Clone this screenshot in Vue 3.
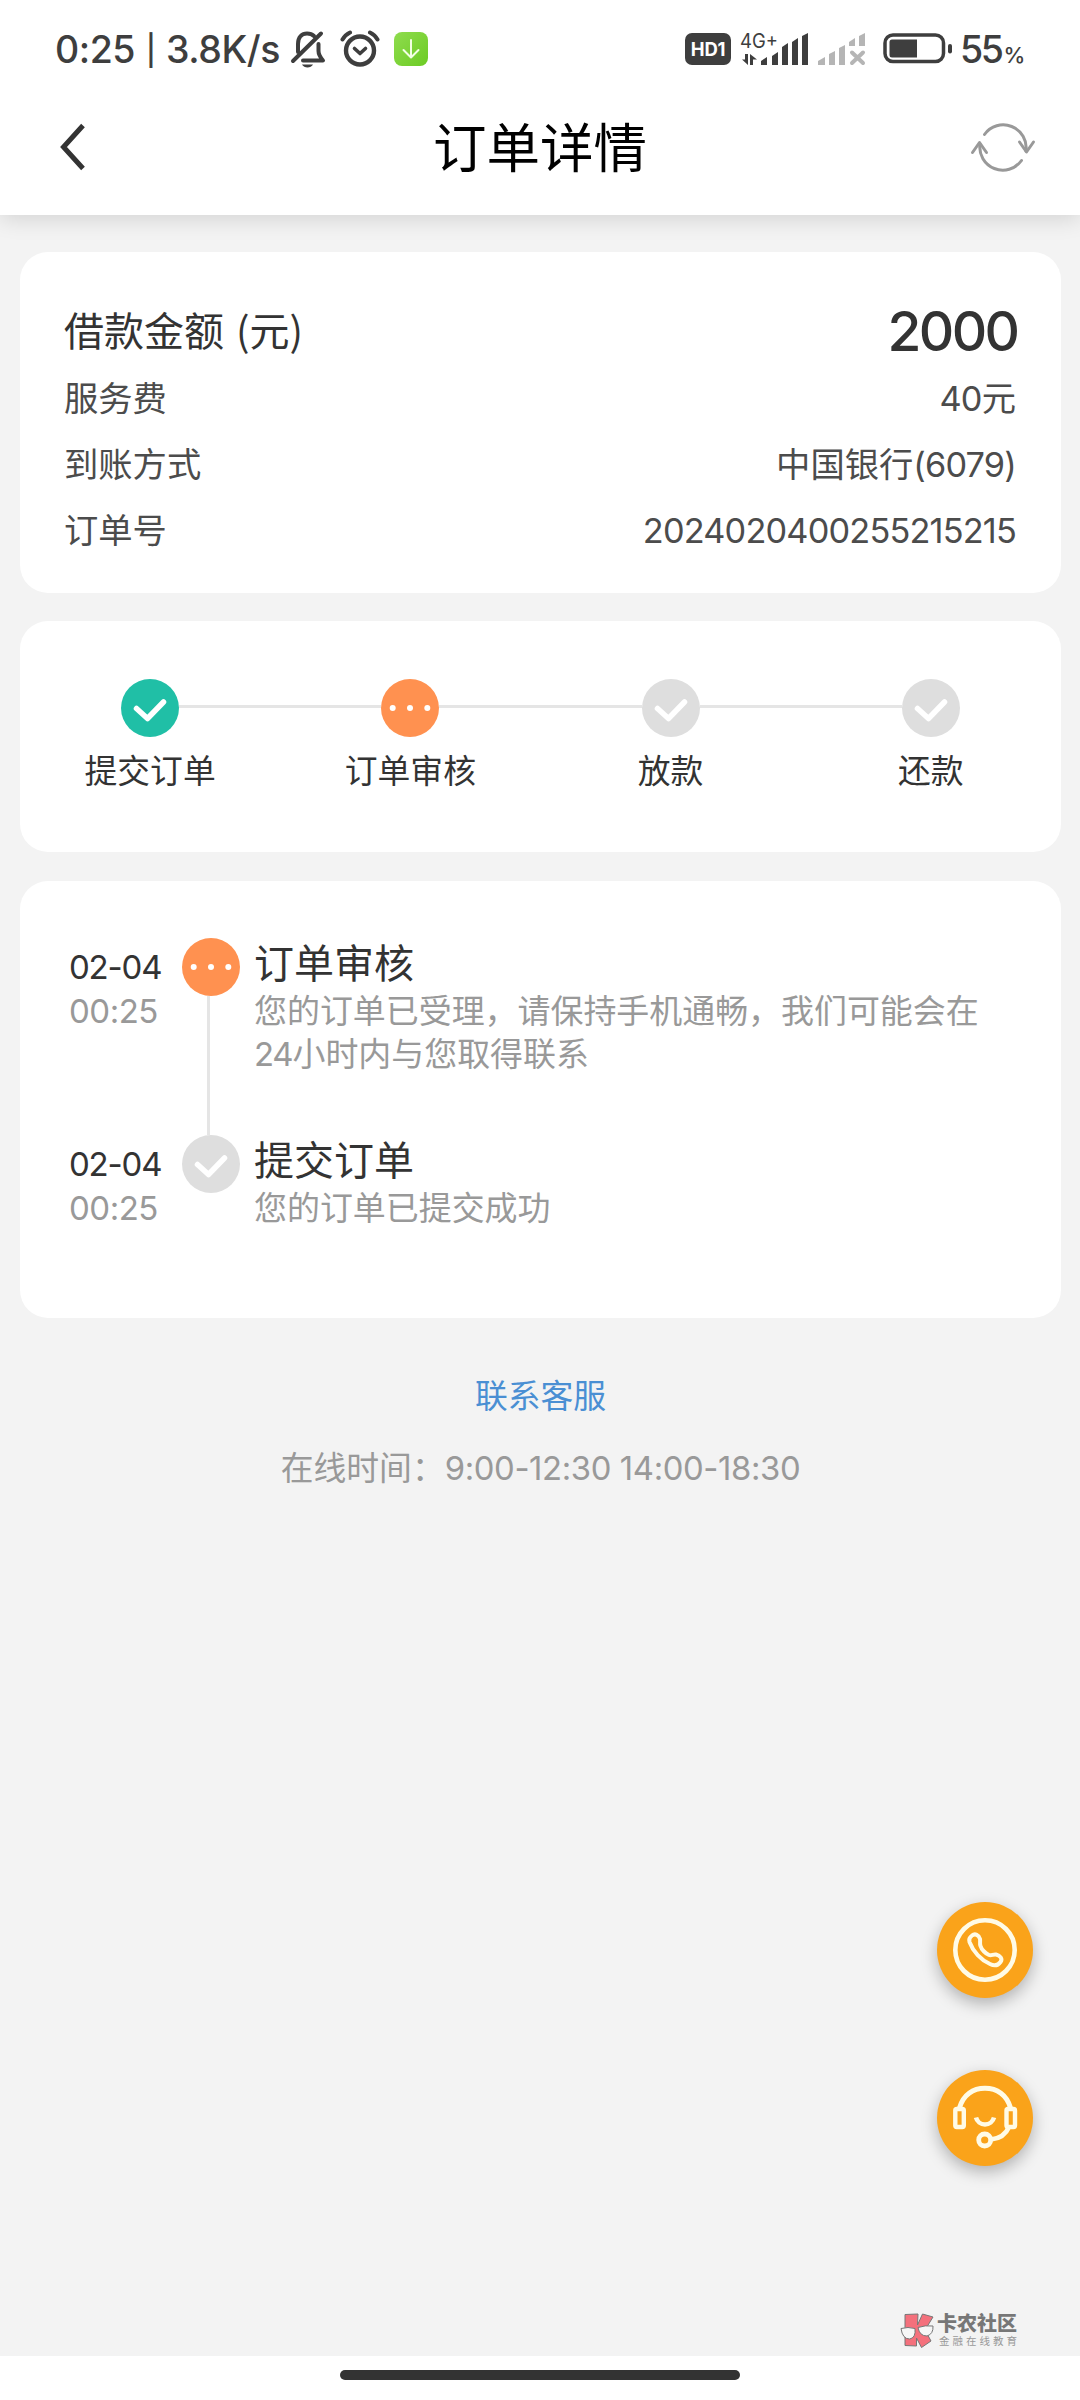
<script setup>
const rows = [
  { label: '服务费', parts: [{ n: '40' }, { t: '元' }] },
  { label: '到账方式', parts: [{ t: '中国银行' }, { n: '(6079)' }] },
  { label: '订单号', parts: [{ n: '2024020400255215215' }] },
]

const steps = [
  { label: '提交订单', state: 'done' },
  { label: '订单审核', state: 'doing' },
  { label: '放款', state: 'todo' },
  { label: '还款', state: 'todo' },
]

const logs = [
  { date: '02-04', time: '00:25', state: 'doing', title: '订单审核', lead: '您的订单已受理，请保持手机通畅，我们可能会在', num: '24', rest: '小时内与您取得联系' },
  { date: '02-04', time: '00:25', state: 'todo', title: '提交订单', lead: '您的订单已提交成功', num: '', rest: '' },
]
</script>

<template>
  <div class="screen">
    <header class="top">
      <div class="status">
        <div class="status-left">
          <span class="clock">0:25 <span class="bar">|</span> 3.8K/s</span>
          <svg class="bell" width="36" height="38" viewBox="0 0 36 38" fill="none" stroke="#3e3e3e" stroke-width="4" stroke-linecap="round">
            <path d="M8 22V14C8 7 12 3.500 17 3.500C20 3.500 22 4 24 6" />
            <path d="M28.500 14V21C28.500 25 30 27 33 30.500H13" stroke-linejoin="round" />
            <path d="M31 3.500L3 31" />
            <path d="M12 34.500h11c-2 4-9 4-11 0z" fill="#3e3e3e" stroke="none" />
          </svg>
          <svg class="alarm" width="40" height="38" viewBox="0 0 40 38" fill="none" stroke="#3e3e3e" stroke-linecap="round">
            <circle cx="20" cy="20.500" r="14" stroke-width="4.400" />
            <path d="M14.500 18.500L20 23.500L25.500 18.500" stroke-width="3.600" stroke-linejoin="round" />
            <path d="M2.500 9.500Q5 5 10 2.500M37.500 9.500Q35 5 30 2.500" stroke-width="4" />
          </svg>
          <svg class="down" width="34" height="34" viewBox="0 0 34 34" fill="none">
            <defs>
              <linearGradient id="dl" x1="0" y1="0" x2="1" y2="1">
                <stop offset="0" stop-color="#8fdc4e" />
                <stop offset="1" stop-color="#6ccb24" />
              </linearGradient>
            </defs>
            <rect width="34" height="34" rx="8" fill="url(#dl)" />
            <path d="M17 8V25M9.500 18L17 25.500L24.500 18" stroke="#f2ffe4" stroke-width="2" stroke-linecap="round" stroke-linejoin="round" />
          </svg>
        </div>
        <div class="status-right">
          <span class="hd">HD1</span>
          <svg class="signal" width="68" height="46" viewBox="0 -10 68 46" fill="#3e3e3e">
            <text x="0" y="15.500" font-family="Inter, sans-serif" font-size="19.500" textLength="38" lengthAdjust="spacingAndGlyphs">4G+</text>
            <path d="M5 22h3v11L2 27.500h3zM10 33V22l7 5.500h-4V33z" />
            <path d="M21 33v-4l6-4v8zM32 33v-9l6-4v13zM42 33V15l6-4v22zM52 33V10l6-4v27zM62 33V4l6-3v32z" />
          </svg>
          <svg class="signal-off" width="48" height="36" viewBox="0 0 48 36" fill="#b5b5b5">
            <path d="M0 33v-4l7-4v8zM11 33V22l6-3v14zM21 33V16l6-3v20zM31 14V10l6-4v8zM41 14V4l6-3v13z" />
            <path d="M34 20.500L45 31M45 20.500L34 31" stroke="#b5b5b5" stroke-width="4" stroke-linecap="round" />
          </svg>
          <svg class="battery" width="70" height="32" viewBox="0 0 70 32">
            <rect x="2" y="2" width="58.500" height="26.500" rx="8" fill="none" stroke="#3e3e3e" stroke-width="3.500" />
            <path d="M9 6.500h25v18H9q-2.500 0-2.500-2.500V9q0-2.500 2.500-2.500z" fill="#3e3e3e" />
            <rect x="65" y="11" width="4" height="9.500" rx="2" fill="#3e3e3e" />
          </svg>
          <span class="pct">55<small>%</small></span>
        </div>
      </div>
      <nav class="nav">
        <svg width="70" height="60" viewBox="0 0 70 60" fill="none" stroke="#333" stroke-width="5">
          <path d="M41 8.500L21.500 30L41 51.500" />
        </svg>
        <h1>订单详情</h1>
        <svg width="70" height="60" viewBox="0 0 70 60" fill="none" stroke="#999" stroke-width="3" stroke-linecap="round" stroke-linejoin="round">
          <path d="M16.500 17.500A23 23 0 0 1 58 34" />
          <path d="M51.500 25L58.500 35L65.500 25" />
          <path d="M53.500 43.500A23 23 0 0 1 12 27" />
          <path d="M4.500 35.500L11.500 25.500L18.500 35.500" />
        </svg>
      </nav>
    </header>

    <main class="body">
      <section class="card summary">
        <div class="row amount">
          <span>借款金额 (元)</span>
          <strong>2000</strong>
        </div>
        <div v-for="r in rows" :key="r.label" class="row">
          <span>{{ r.label }}</span>
          <span class="val"><template v-for="(p, i) in r.parts" :key="i"><span v-if="p.n" class="num">{{ p.n }}</span><template v-else>{{ p.t }}</template></template></span>
        </div>
      </section>

      <section class="card steps">
        <div v-for="s in steps" :key="s.label" class="step">
          <div class="rail">
            <svg class="dot" :class="s.state" width="58" height="58" viewBox="0 0 58 58">
              <circle cx="29" cy="29" r="29" />
              <g v-if="s.state === 'doing'" class="pips">
                <circle cx="11.700" cy="29" r="3" /><circle cx="29" cy="29" r="3" /><circle cx="46.300" cy="29" r="3" />
              </g>
              <path v-else d="M15.500 29.500L26.500 39.500L42.500 23" />
            </svg>
          </div>
          <span class="step-label">{{ s.label }}</span>
        </div>
      </section>

      <section class="card timeline">
        <div v-for="l in logs" :key="l.title" class="log">
          <div class="when">
            <span class="date">{{ l.date }}</span>
            <span class="time">{{ l.time }}</span>
          </div>
          <div class="track">
            <svg class="dot" :class="l.state" width="58" height="58" viewBox="0 0 58 58">
              <circle cx="29" cy="29" r="29" />
              <g v-if="l.state === 'doing'" class="pips">
                <circle cx="11.700" cy="29" r="3" /><circle cx="29" cy="29" r="3" /><circle cx="46.300" cy="29" r="3" />
              </g>
              <path v-else d="M15.500 29.500L26.500 39.500L42.500 23" />
            </svg>
            <i class="line"></i>
          </div>
          <div class="what">
            <h2>{{ l.title }}</h2>
            <p>{{ l.lead }}<span v-if="l.num" class="num">{{ l.num }}</span>{{ l.rest }}</p>
          </div>
        </div>
      </section>

      <a class="contact">联系客服</a>
      <p class="hours">在线时间：<span class="num">9:00-12:30 14:00-18:30</span></p>

      <div class="floats">
        <button class="fab" aria-label="电话">
          <svg width="96" height="96" viewBox="0 0 96 96" fill="none" stroke="#fffbe6" stroke-linejoin="round" stroke-linecap="round">
            <circle cx="48" cy="48" r="29.700" stroke-width="4.600" />
            <path d="M35 33.500C38 31 42 33 43 37C43.500 39 42.500 41.500 43.500 44C44.500 47.500 48.500 51.500 52 53C54.500 54 56 52 59 52.500C63 53.500 66 56.500 63.500 60C61 63.500 57 64 53 62C44 58 36 49.500 32.500 40C31.500 37 33 35 35 33.500Z" stroke-width="4" />
          </svg>
        </button>
        <button class="fab" aria-label="客服">
          <svg width="96" height="96" viewBox="0 0 96 96" fill="none" stroke="#fffbe6" stroke-linecap="butt">
            <path d="M22.500 38C26 25 36 18.300 48 18.300S70 25 73.500 38" stroke-width="5" />
            <rect x="18.300" y="39" width="8.500" height="18" rx="1.500" stroke-width="4.400" />
            <rect x="69.500" y="39" width="8.500" height="18" rx="1.500" stroke-width="4.400" />
            <path d="M39 47.500A9.300 9.300 0 0 0 57 47.500" stroke-width="4.600" />
            <circle cx="47.700" cy="70" r="6" stroke-width="4.800" />
            <path d="M54 69.500C63 68.500 69 64 72 57" stroke-width="4.600" />
          </svg>
        </button>
      </div>

      <div class="brand">
        <svg width="34" height="36" viewBox="0 0 34 36" stroke="#777" stroke-width="1" stroke-linejoin="round">
          <path d="M5 1.500L18 1L17.500 12L22.500 1L33 4L25 17L31 28L21.500 34.500L16.500 25V33L5 32.500Z" fill="#f4707c" />
          <path d="M1 15.500Q8 13.500 15 15.500Q16 25 9.500 26Q2.500 26 1 15.500ZM18 14.500Q25 12 33 13Q33.500 21 27 23Q19.500 23 18 14.500Z" fill="#f6f6f6" />
        </svg>
        <div class="brand-text">
          <b>卡农社区</b>
          <span>金融在线教育</span>
        </div>
      </div>
    </main>

    <footer class="gesture"><i></i></footer>
  </div>
</template>

<style>
body {
  background: #fff;
}
</style>

<style scoped>
.screen {
  width: 1080px;
  height: 2400px;
  display: flex;
  flex-direction: column;
  background: #f3f3f3;
  font-family: 'Noto Sans CJK SC', sans-serif;
  color: #333;
  overflow: hidden;
}
h1, h2, p { margin: 0; font-weight: 400; }
.num { font-family: Inter, sans-serif; }

/* header */
.top {
  flex: none;
  height: 215px;
  background: #fff;
  box-shadow: 0 3px 22px rgba(0, 0, 0, 0.14);
  z-index: 1;
}
.status {
  height: 98px;
  display: flex;
  justify-content: space-between;
  padding: 0 55px;
  color: #3e3e3e;
  font-family: Inter, sans-serif;
}
.status-left, .status-right { display: flex; align-items: flex-start; }
.clock { width: 234px; font-size: 37.500px; font-weight: 500; line-height: 100px; letter-spacing: -0.450px; white-space: pre; }
.bar { font-size: 30px; margin: 0 1px; vertical-align: 2px; line-height: 1; }
.bell { margin: 30px 0 0 1px; }
.alarm { margin: 30px 0 0 14px; }
.down { margin: 32px 0 0 14px; }
.hd {
  width: 46px;
  height: 32px;
  margin-top: 33px;
  border-radius: 7px;
  background: #3e3e3e;
  color: #fff;
  font-size: 18.500px;
  font-weight: 700;
  line-height: 32px;
  text-align: center;
  letter-spacing: -0.3px;
}
.signal { margin: 22px 0 0 9px; }
.signal-off { margin: 32px 0 0 10px; }
.battery { margin: 33px 0 0 17px; }
.pct { width: 65px; margin-left: 7px; font-size: 37.500px; font-weight: 500; line-height: 100px; letter-spacing: -2.500px; white-space: nowrap; }
.pct small { font-size: 22px; margin-left: 2px; letter-spacing: 0; }
.nav {
  display: flex;
  align-items: center;
  justify-content: space-between;
  height: 98px;
  padding: 0 42px;
}
.nav h1 { margin-top: -5px; font-size: 53.500px; line-height: 93px; color: #000; }

/* cards */
.body {
  position: relative;
  flex: 1;
  display: flex;
  flex-direction: column;
  padding: 37px 19px 0 20px;
}
.card { flex: none; border-radius: 28px; background: #fff; margin-bottom: 28px; }
.summary { height: 341px; padding: 44px 45px 0 44px; box-sizing: border-box; }
.row {
  display: flex;
  justify-content: space-between;
  height: 66px;
  line-height: 66px;
  font-size: 34.300px;
  color: #4c4c4c;
  white-space: nowrap;
}
.row .num { letter-spacing: -0.820px; }
.row.amount { height: 67px; color: #333; font-size: 40px; word-spacing: 3px; }
.amount strong { padding-top: 2px; font-family: Inter, sans-serif; font-size: 55px; font-weight: 500; letter-spacing: -2.600px; margin-right: -1.500px; }

.steps { display: flex; height: 231px; margin-bottom: 29px; }
.step { flex: 1; display: flex; flex-direction: column; align-items: center; padding-top: 58px; }
.rail { width: 100%; display: flex; align-items: center; }
.rail::before, .rail::after { content: ''; flex: 1; height: 3px; margin-top: -3px; background: #e5e5e5; }
.step:first-child .rail::before, .step:last-child .rail::after { background: none; }
.dot { flex: none; display: block; fill: #dedede; }
.dot.done { fill: #20bfa6; }
.dot.doing { fill: #ff9150; }
.dot path { fill: none; stroke: #fff; stroke-width: 5.500; stroke-linecap: round; stroke-linejoin: round; }
.pips { fill: #fff; }
.step-label { margin-top: 8px; font-size: 32.800px; line-height: 48px; }

.timeline { height: 437px; padding: 57px 45px 0 49px; box-sizing: border-box; }
.log { display: flex; height: 197px; }
.when { width: 113px; display: flex; flex-direction: column; padding-top: 8px; font-family: Inter, sans-serif; font-size: 33px; line-height: 43.500px; }
.date { letter-spacing: -1.200px; }
.time { color: #999; letter-spacing: -0.500px; }
.track { width: 58px; display: flex; flex-direction: column; align-items: center; }
.line { flex: 1; width: 3px; margin-left: -5px; background: #e5e5e5; }
.log:last-child .line { display: none; }
.what { margin: -3px 0 0 14px; width: 750px; }
.what h2 { font-size: 40px; line-height: 52px; }
.what p { font-size: 32.950px; line-height: 43px; color: #999; }
.what .num { letter-spacing: -1.200px; }

.contact { align-self: center; margin-top: 24px; font-size: 32.800px; line-height: 48px; color: #4a8fd3; }
.hours { align-self: center; margin-top: 24px; font-size: 32.800px; line-height: 48px; color: #999; white-space: nowrap; }
.hours .num { letter-spacing: -0.370px; }

/* overlays */
.floats { position: absolute; right: 47px; top: 1687px; display: flex; flex-direction: column; gap: 72px; }
.fab {
  width: 96px;
  height: 96px;
  padding: 0;
  border: 0;
  border-radius: 50%;
  background: #faa31a;
  box-shadow: 0 6px 16px rgba(0, 0, 0, 0.27);
}
.fab svg { display: block; }
.brand { position: absolute; left: 900px; bottom: 7px; display: flex; gap: 3px; }
.brand-text { display: flex; flex-direction: column; white-space: nowrap; }
.brand-text b { font-size: 20px; line-height: 20px; font-weight: 900; color: #777; }
.brand-text span { margin-top: 1px; font-size: 10.500px; line-height: 14px; letter-spacing: 3px; margin-left: 2px; color: #999; }

.gesture { flex: none; height: 44px; display: flex; justify-content: center; background: #fff; }
.gesture i { width: 400px; height: 10px; margin-top: 14px; border-radius: 5px; background: #333; }
</style>
